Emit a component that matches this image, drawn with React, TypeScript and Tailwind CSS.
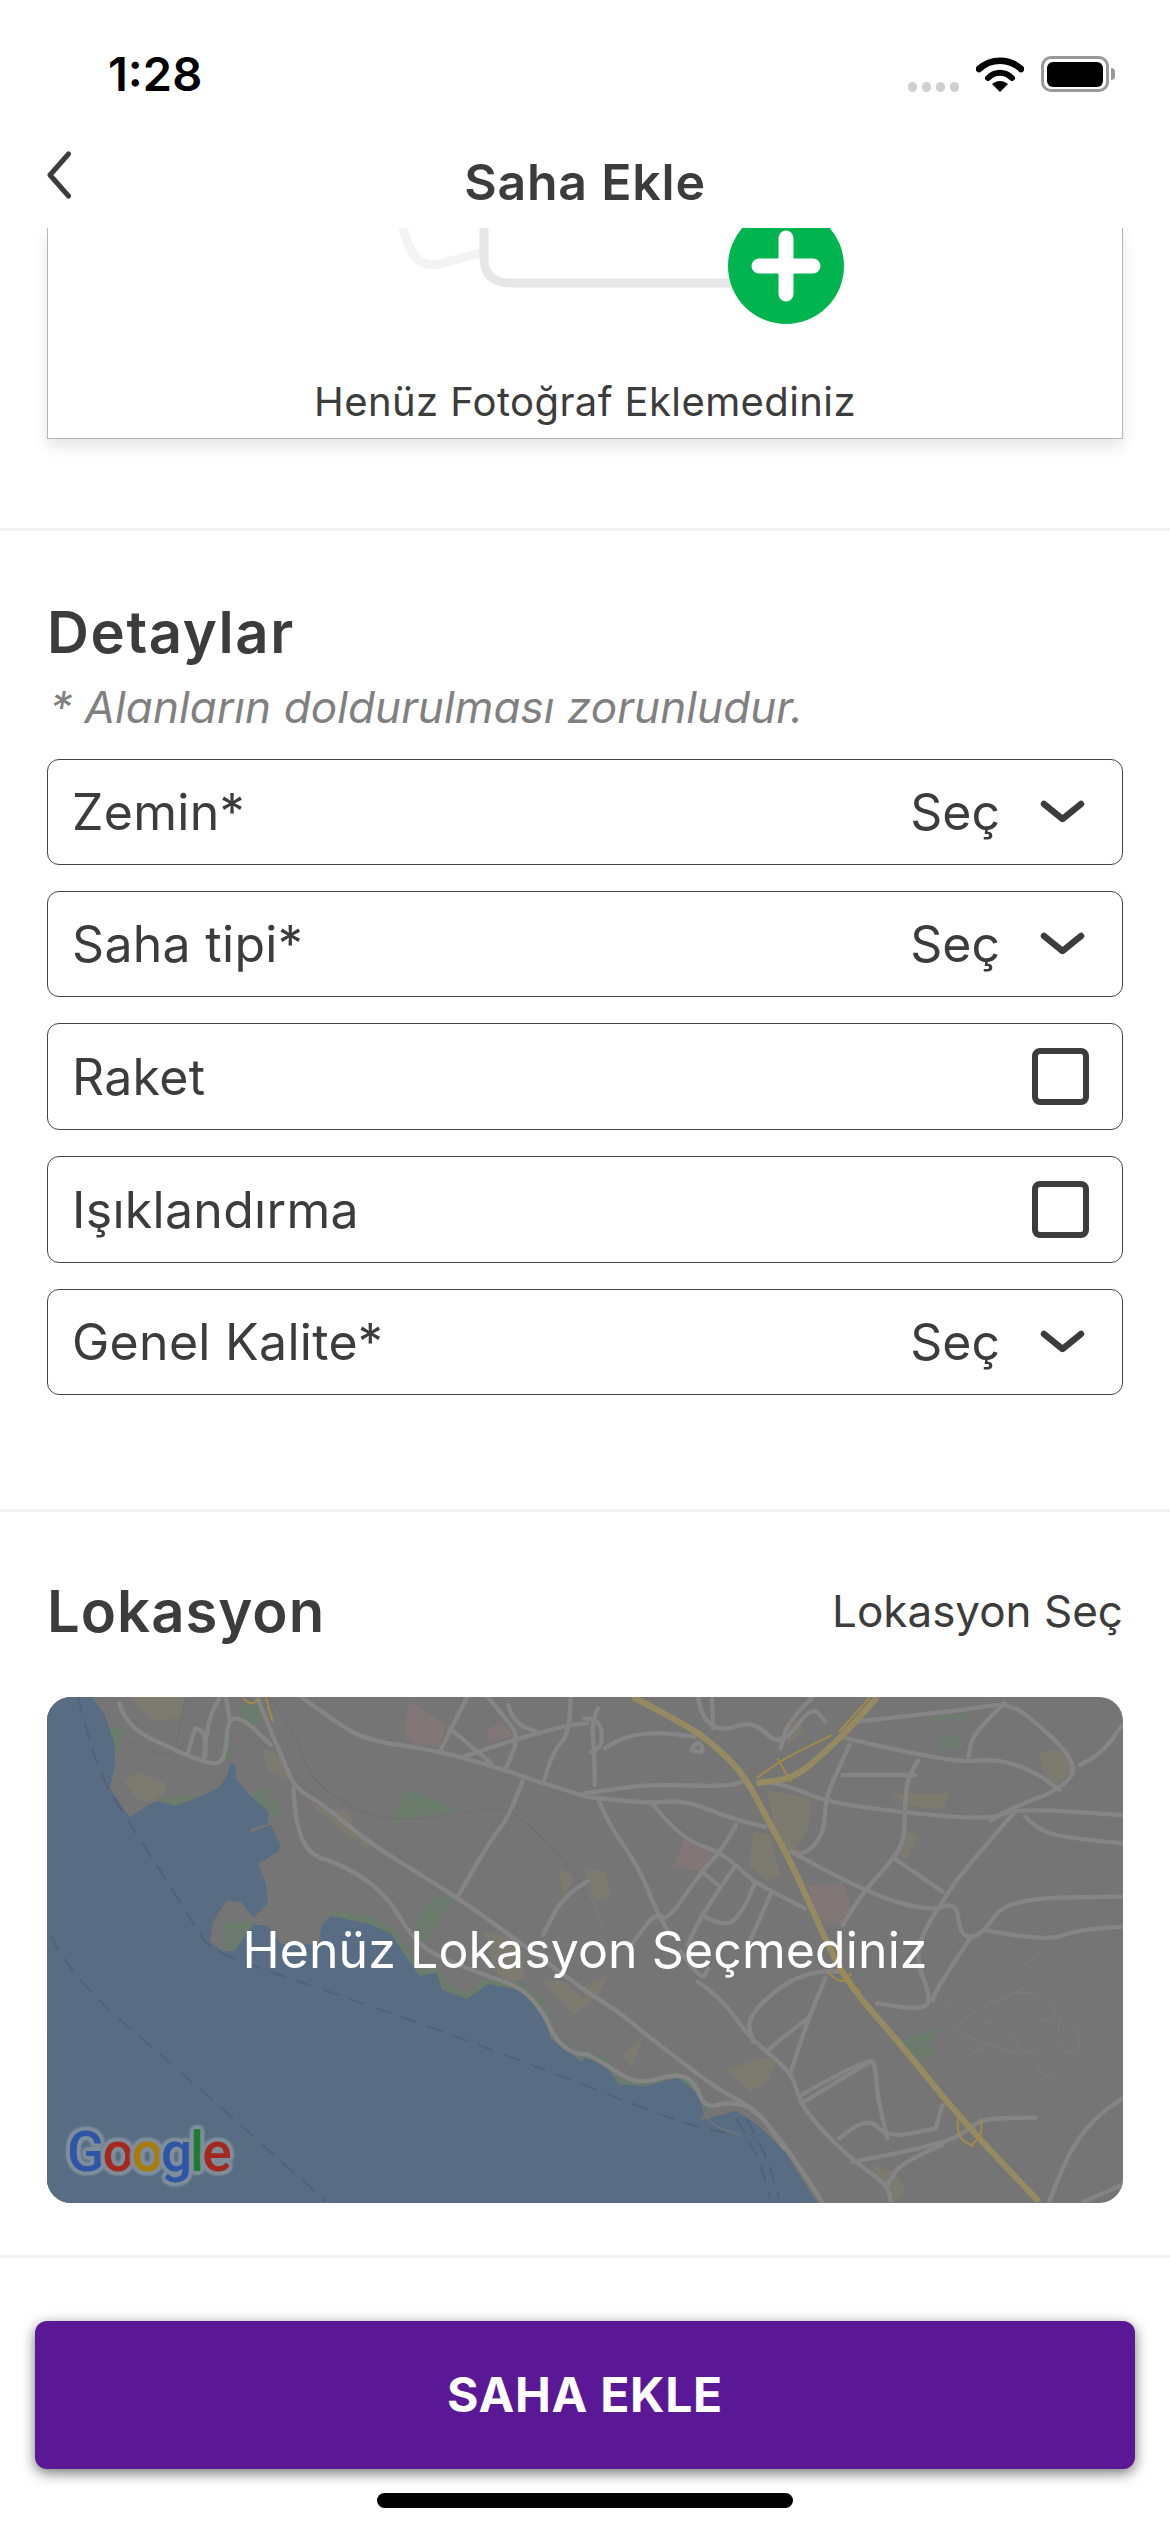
// map traced from the reference zoom: left half and right half of the map (right one starts at x=1560)
const smooth = (points: string) => {
  const p = points.split(" ").map((s) => s.split(",").map(Number));
  let d = `M${p[0][0]} ${p[0][1]}`;
  for (let i = 1; i < p.length - 1; i++) {
    const mx = (p[i][0] + p[i + 1][0]) / 2;
    const my = (p[i][1] + p[i + 1][1]) / 2;
    d += ` Q${p[i][0]} ${p[i][1]} ${mx} ${my}`;
  }
  const last = p[p.length - 1];
  return `${d} L${last[0]} ${last[1]}`;
};

const GREEN = "#6b7c6d";
const TAN = "#7d7a70";
const PINK = "#827777";

const water =
  "0,6 130,6 165,60 195,150 195,215 180,280 240,370 290,335 320,320 375,335 450,305 500,280 525,240 535,205 547,215 545,250 590,305 640,350 640,385 590,400 590,415 650,392 675,450 670,470 610,505 635,570 638,625 600,665 565,620 520,615 480,680 470,740 510,770 545,770 600,690 640,695 680,750 790,750 800,690 825,665 940,690 1000,720 1030,770 1080,845 1130,835 1145,885 1220,915 1280,870 1370,885 1430,935 1460,1030 1555,1105 1560,1090 1620,1110 1660,1170 1740,1175 1830,1150 1880,1190 1910,1250 1890,1280 2000,1250 2060,1290 2140,1370 2200,1470 2235,1524 0,1524";

const coastGreen =
  "825,655 940,675 1000,710 1040,770 1080,835 1130,825 1150,875 1220,905 1280,860 1370,875 1435,925 1470,1030 1555,1095 1560,1080 1620,1100 1660,1160 1740,1165 1830,1140 1880,1180 1916,1245";

const blocksLeft = [
  { fill: TAN, points: "240,6 400,6 395,70 300,75" },
  { fill: GREEN, points: "180,95 225,100 205,185" },
  { fill: TAN, points: "225,260 265,230 345,265 345,295 290,320 260,310" },
  { fill: GREEN, points: "320,305 450,298 420,320 375,335" },
  { fill: GREEN, points: "560,30 630,30 620,85 570,90" },
  { fill: GREEN, points: "625,275 685,355 640,370 590,300" },
  { fill: TAN, points: "625,155 690,190 710,260 640,225" },
  { fill: GREEN, points: "990,380 1040,290 1090,295 1190,345 1000,385" },
  { fill: TAN, points: "760,325 820,340 880,350 890,400 950,435 930,460 860,410" },
  { fill: PINK, points: "1050,15 1160,90 1140,155 1065,150 1040,110" },
  { fill: PINK, points: "1320,75 1355,125 1285,145 1275,110" },
  { fill: GREEN, points: "1100,625 1140,600 1180,615 1100,740 1060,720" },
  { fill: TAN, points: "1485,520 1530,545 1500,610" },
  { fill: TAN, points: "1270,710 1370,730 1390,850 1340,860 1300,830" },
  { fill: TAN, points: "1430,850 1500,860 1568,920 1530,960" },
  { fill: GREEN, points: "520,680 600,680 550,770 510,770" },
  { fill: GREEN, points: "520,80 538,80 530,195 515,195" },
];

const blocksRight = [
  { fill: PINK, points: "290,435 375,480 330,530 260,510" },
  { fill: PINK, points: "650,575 750,560 775,640 745,690 680,680" },
  { fill: TAN, points: "580,90 620,80 640,110 590,150" },
  { fill: TAN, points: "530,285 660,310 650,400 610,470 560,440" },
  { fill: TAN, points: "490,410 540,420 570,540 530,560 480,510" },
  { fill: TAN, points: "0,520 60,530 75,600 30,620" },
  { fill: TAN, points: "1320,170 1400,160 1430,220 1360,275 1330,230" },
  { fill: TAN, points: "890,295 1060,295 1040,345 930,330" },
  { fill: TAN, points: "930,410 970,420 940,490 905,480" },
  { fill: TAN, points: "415,1125 510,1085 560,1100 530,1160 480,1190" },
  { fill: TAN, points: "110,1080 175,1020 135,1120" },
  { fill: TAN, points: "830,1410 900,1430 935,1490 900,1520 870,1470" },
  { fill: TAN, points: "0,870 70,840 40,900 0,940" },
  { fill: GREEN, points: "915,1040 1030,995 1000,1050 1020,1090 960,1090" },
  { fill: GREEN, points: "1030,130 1090,118 1090,155 1035,165" },
  { fill: GREEN, points: "1010,65 1130,55 1100,70 1015,75" },
  { fill: GREEN, points: "20,155 35,155 35,230 25,230" },
];

const roadsLeft = [
  "740,6 860,100 950,140 1130,165 1330,225 1440,265 1568,305",
  "610,6 650,110 680,180 720,280 790,320 860,380 960,460 1180,600 1330,710 1500,840 1568,890",
  "715,280 720,380 760,480 850,505 980,590 1060,730 1140,790 1300,850 1380,880 1440,950 1480,1040 1530,1075 1568,1078",
  "1380,260 1340,370 1290,430 1190,610",
  "1220,6 1145,160",
  "1280,6 1340,80 1370,130 1330,225",
  "1170,100 1290,205",
  "1210,185 1380,125 1520,90 1568,85",
  "1520,6 1520,110 1470,170 1440,265",
  "1340,30 1350,80 1430,115",
  "210,25 230,95 370,165 440,195 500,210 520,170 525,70 570,70 650,150",
  "500,10 470,60 455,190",
  "430,100 410,170",
  "430,100 460,105 460,185",
  "520,10 530,70",
  "1568,560 1500,600 1440,720",
];

const roadsRight = [
  "8,305 40,310 200,325 290,315 440,375 525,395",
  "0,295 100,280 200,268 420,275 470,255",
  "8,890 100,950 180,1020 320,1130 400,1190 490,1240 560,1320 640,1440 690,1520",
  "8,1078 50,1100 150,1170 270,1135 320,1160 350,1240 420,1220 500,1240 580,1360",
  "40,40 20,80 30,170 30,270",
  "0,70 45,70 55,150 20,170",
  "60,160 100,130 200,110 320,125",
  "330,6 340,70 400,110 490,75 570,160 660,30 700,80",
  "370,6 375,100",
  "310,165 330,130 350,175 310,165",
  "520,260 590,270 700,320 900,350 1180,375 1250,340 1562,360",
  "660,10 590,80 570,160",
  "790,80 1010,55 1130,40 1220,25 1290,60 1440,210 1380,285 1270,325 1180,375",
  "1220,25 1130,110 1115,185",
  "760,130 1070,205 1190,190 1300,225 1380,285",
  "770,150 720,260 700,320 695,420 640,480 600,470",
  "1440,210 1500,180 1562,90",
  "750,240 960,240",
  "970,195 940,240 930,330 930,430 900,490 810,590 750,690",
  "1250,350 1090,540 1040,620 990,700 960,790 1010,915 975,945 850,925",
  "1280,365 1320,410 1420,430 1562,445",
  "600,470 810,590 1000,650 1080,620 1090,710 1120,730 1160,710 1230,610 1562,605",
  "900,490 1040,590",
  "1160,705 1340,740 1430,705 1562,695",
  "1120,730 1030,870 1010,915",
  "200,330 280,430 390,470 440,510 490,560 640,640",
  "440,390 400,465 340,530 240,680 210,650 150,730 130,760",
  "40,310 60,370 160,520 210,650 250,720",
  "440,510 340,660 300,750",
  "390,570 340,530",
  "340,660 410,700 460,650 495,565",
  "540,600 480,740",
  "330,860 400,910 480,1030 600,1130 620,1200 650,1260 760,1380 880,1470 890,1520",
  "280,770 340,860 360,820",
  "740,830 640,820 470,960 490,1040",
  "700,850 650,970 600,1130",
  "650,970 560,1040 530,1070",
  "630,1200 820,1090 845,1105 850,1200 880,1330",
  "630,1225 830,1100",
  "740,1330 820,1260 880,1330 1020,1300",
  "780,1400 1040,1350 1120,1300 1160,1270 1310,1268",
  "1040,1350 920,1400 880,1470",
  "1350,1520 1400,1380 1480,1270 1562,1210",
  "1020,1300 1040,1230",
  "1450,1520 1562,1470",
];

const thinLeft = [
  "215,130 340,190 370,160",
  "400,20 375,150",
  "650,10 720,110 770,270 980,390 1300,335 1360,350 1530,520 1568,620",
];

const thinRight = [
  "1070,1000 1250,850 1410,970 1310,1100 1080,1010",
  "1410,970 1450,1045 1410,1080 1370,1040",
  "1170,910 1185,935 1290,870",
  "1100,1090 1170,1050",
  "1240,1010 1270,1050 1250,1100",
  "1130,990 1190,980",
  "1330,950 1380,945 1340,985 1310,960",
  "1280,810 1340,760",
  "1310,1100 1340,1160 1380,1130",
  "1040,930 1090,930 1120,900",
  "8,570 60,710",
  "320,1130 340,1240 370,1290 450,1320",
];

const highways = [
  "140,6 300,90 400,170 470,250 530,370 600,500 690,710 760,860 920,1050 1100,1280 1320,1520",
  "850,6 780,90 700,170 610,250 500,265",
];

const highwaysThin = [
  "830,6 740,110",
  "500,250 560,200 720,120",
  "560,190 600,260",
  "720,760 745,845 800,890",
  "1085,1270 1080,1325 1130,1355",
  "1150,1270 1160,1310 1125,1350",
  "705,830 745,870 775,835",
];

const MapDrawing = () => (
  <svg viewBox="0 6 3124 1518" preserveAspectRatio="none" className="block h-full w-full">
    <rect x="0" y="6" width="3124" height="1518" fill="#757575" />
    {blocksLeft.map((b, i) => (
      <polygon key={i} points={b.points} fill={b.fill} />
    ))}
    <g transform="translate(1560 0)">
      {blocksRight.map((b, i) => (
        <polygon key={i} points={b.points} fill={b.fill} />
      ))}
    </g>
    <polyline points={coastGreen} fill="none" stroke={GREEN} strokeWidth="22" strokeLinejoin="round" />
    <polygon points={water} fill="#586d83" stroke="#586d83" strokeWidth="4" strokeLinejoin="round" />

    {thinLeft.map((p, i) => (
      <path key={i} d={smooth(p)} fill="none" stroke="#6e6e6e" strokeWidth="3" />
    ))}
    {roadsLeft.map((p, i) => (
      <path key={i} d={smooth(p)} fill="none" stroke="#858585" strokeWidth="13" strokeLinecap="round" />
    ))}
    <g transform="translate(1560 0)">
      {thinRight.map((p, i) => (
        <path key={i} d={smooth(p)} fill="none" stroke="#7d7d7d" strokeWidth="3" />
      ))}
      {roadsRight.map((p, i) => (
        <path key={i} d={smooth(p)} fill="none" stroke="#858585" strokeWidth="13" strokeLinecap="round" />
      ))}
      {highways.map((p, i) => (
        <path key={i} d={smooth(p)} fill="none" stroke="#968a62" strokeWidth="18" />
      ))}
      {highwaysThin.map((p, i) => (
        <path key={i} d={smooth(p)} fill="none" stroke="#a08a4c" strokeWidth="6" />
      ))}
    </g>
    <path d="M570 10 Q595 40 615 10 M635 6 L655 80" fill="none" stroke="#a08a4c" strokeWidth="6" />

    <path d={smooth("90,6 130,170 180,290 300,480 440,710 480,770 760,870 1100,990 1560,1170 1860,1290 2000,1320")} fill="none" stroke="#4f6279" strokeWidth="6" strokeDasharray="50 30" />
    <path d={smooth("10,720 70,850 400,1140 810,1520")} fill="none" stroke="#4f6279" strokeWidth="6" strokeDasharray="50 30" />
    <path d={smooth("2000,1270 2060,1370 2100,1510")} fill="none" stroke="#4f6279" strokeWidth="6" strokeDasharray="50 30" />
    <path d={smooth("2030,1270 2090,1380 2125,1510")} fill="none" stroke="#4f6279" strokeWidth="6" strokeDasharray="50 30" />
  </svg>
);

const StatusBar = () => (
  <div className="flex h-[112px] items-end justify-between pb-[15px] pl-[108px] pr-[55px]">
    <span className="text-[47px] font-semibold leading-[47px] text-black">1:28</span>
    <div className="flex items-end gap-[17px] pb-[5px]">
      <div className="flex gap-[5px]">
        {[0, 1, 2, 3].map((i) => (
          <span key={i} className="h-[10px] w-[9px] rounded-full bg-[#cfcfcf]" />
        ))}
      </div>
      <svg width="48" height="37" viewBox="0 0 48 37">
        <path d="M3 14 C15 3 33 3 45 14" fill="none" stroke="#000" strokeWidth="6.5" strokeLinecap="round" />
        <path d="M12 23 C19 16 29 16 36 23" fill="none" stroke="#000" strokeWidth="6" strokeLinecap="round" />
        <path d="M16 29 C21 25 27 25 32 29 L24 37 Z" fill="#000" />
      </svg>
      <div className="flex items-center gap-[2px]">
        <div className="flex h-[36px] w-[68px] items-center justify-center rounded-[10px] border-[3px] border-[#999999]">
          <div className="h-[25px] w-[56px] rounded-[6px] bg-black" />
        </div>
        <div className="h-[12px] w-[4px] rounded-r-full bg-[#999999]" />
      </div>
    </div>
  </div>
);

const NavBar = () => (
  <div className="relative flex h-[116px] justify-center bg-white">
    <svg className="absolute left-[46px] top-[39px]" width="26" height="48" viewBox="0 0 26 48">
      <path d="M22.5 3 L4 24 L22.5 45" fill="none" stroke="#3c3c3c" strokeWidth="5" strokeLinecap="round" strokeLinejoin="round" />
    </svg>
    <h1 className="mt-[40px] text-[50px] font-semibold leading-[60px] tracking-[0.8px] text-[#3c3c3c]">Saha Ekle</h1>
  </div>
);

const PhotoCard = () => (
  <div className="mx-[47px] flex h-[211px] w-[1076px] flex-col items-center border-x border-b border-[#b5b5b5] bg-white shadow-[0_8px_14px_rgba(0,0,0,0.1)]">
    <svg width="450" height="96" viewBox="395 228 450 96" className="ml-[71px] shrink-0">
      <path d="M402 228 C408 250 414 268 438 264 L483 252" fill="none" stroke="#f3f3f3" strokeWidth="9" />
      <path d="M483 228 L483 258 Q483 283 510 283 L735 283" fill="none" stroke="#e7e7e7" strokeWidth="9" />
      <circle cx="785" cy="266" r="58" fill="#00b44f" />
      <path d="M785 238 L785 294 M758 266 L812 266" stroke="#fff" strokeWidth="15" strokeLinecap="round" />
    </svg>
    <p className="mt-[54px] text-[40px] leading-[48px] tracking-[0.4px] text-[#3c3c3c]">Henüz Fotoğraf Eklemediniz</p>
  </div>
);

const SelectRow = ({ label }: { label: string }) => (
  <div className="flex h-[106px] items-center justify-between rounded-[12px] border border-[#444444] pl-[24px] pr-[37px]">
    <span className="text-[50px] leading-[60px] tracking-[0.3px] text-[#3c3c3c]">{label}</span>
    <div className="flex items-center gap-[40px]">
      <span className="text-[50px] leading-[60px] text-[#3c3c3c]">Seç</span>
      <svg width="45" height="24" viewBox="0 0 45 24">
        <path d="M4 4 L22.5 19 L41 4" fill="none" stroke="#3c3c3c" strokeWidth="6.5" strokeLinecap="round" strokeLinejoin="round" />
      </svg>
    </div>
  </div>
);

const CheckRow = ({ label }: { label: string }) => (
  <div className="flex h-[107px] items-center justify-between rounded-[12px] border border-[#444444] pl-[24px] pr-[33px]">
    <span className="text-[50px] leading-[60px] tracking-[0.3px] text-[#3c3c3c]">{label}</span>
    <div className="h-[57px] w-[57px] rounded-[8px] border-[6px] border-[#3c3c3c]" />
  </div>
);

const Divider = () => <div className="h-[3px] bg-[#f3f3f3]" />;

export default function App() {
  return (
    <div
      className="flex h-[2532px] w-[1170px] flex-col overflow-hidden bg-white"
      style={{ fontFamily: "Inter, 'Noto Sans', sans-serif" }}
    >
      <StatusBar />
      <NavBar />
      <PhotoCard />

      <div className="mt-[89px]">
        <Divider />
      </div>

      <section className="flex flex-col px-[47px] pt-[68px]">
        <h2 className="text-[58px] font-semibold leading-[66px] tracking-[1.6px] text-[#3c3c3c]">Detaylar</h2>
        <p className="ml-[3px] mt-[17px] text-[44px] italic leading-[50px] tracking-[0.1px] text-[#808080]">
          * Alanların doldurulması zorunludur.
        </p>
        <div className="mt-[27px] flex flex-col gap-[26px]">
          <SelectRow label="Zemin*" />
          <SelectRow label="Saha tipi*" />
          <CheckRow label="Raket" />
          <CheckRow label="Işıklandırma" />
          <SelectRow label="Genel Kalite*" />
        </div>
      </section>

      <div className="mt-[114px]">
        <Divider />
      </div>

      <section className="flex flex-col px-[47px] pt-[66px]">
        <div className="flex items-center justify-between">
          <h2 className="text-[58px] font-semibold leading-[66px] tracking-[1px] text-[#3c3c3c]">Lokasyon</h2>
          <span className="text-[44px] leading-[56px] text-[#3c3c3c]">Lokasyon Seç</span>
        </div>
        <div className="relative mt-[53px] h-[506px] overflow-hidden rounded-[24px]">
          <MapDrawing />
          <div className="absolute inset-0 flex items-center justify-center">
            <span className="text-[50px] leading-[60px] tracking-[0.1px] text-white">Henüz Lokasyon Seçmediniz</span>
          </div>
          <div className="absolute bottom-[18px] left-[20px] text-[55px] font-medium leading-[66px] tracking-[-2px] [font-family:Roboto,sans-serif] [text-shadow:4px_0_2px_#7f8e9c,-4px_0_2px_#7f8e9c,0_4px_2px_#7f8e9c,0_-4px_2px_#7f8e9c,3px_3px_2px_#7f8e9c,-3px_-3px_2px_#7f8e9c,3px_-3px_2px_#7f8e9c,-3px_3px_2px_#7f8e9c]">
            <span className="text-[#2f55a5]">G</span>
            <span className="text-[#a3281e]">o</span>
            <span className="text-[#a87c08]">o</span>
            <span className="text-[#2f55a5]">g</span>
            <span className="text-[#1f7a32]">l</span>
            <span className="text-[#a3281e]">e</span>
          </div>
        </div>
      </section>

      <div className="mt-[52px]">
        <Divider />
      </div>

      <div className="mx-[35px] mt-[63px] flex h-[148px] items-center justify-center rounded-[12px] bg-[#5a1897] shadow-[0_4px_14px_rgba(0,0,0,0.55)]">
        <span className="text-[48px] font-bold tracking-[0.7px] text-white">SAHA EKLE</span>
      </div>

      <div className="mx-auto mt-[24px] h-[15px] w-[416px] rounded-full bg-black" />
    </div>
  );
}
